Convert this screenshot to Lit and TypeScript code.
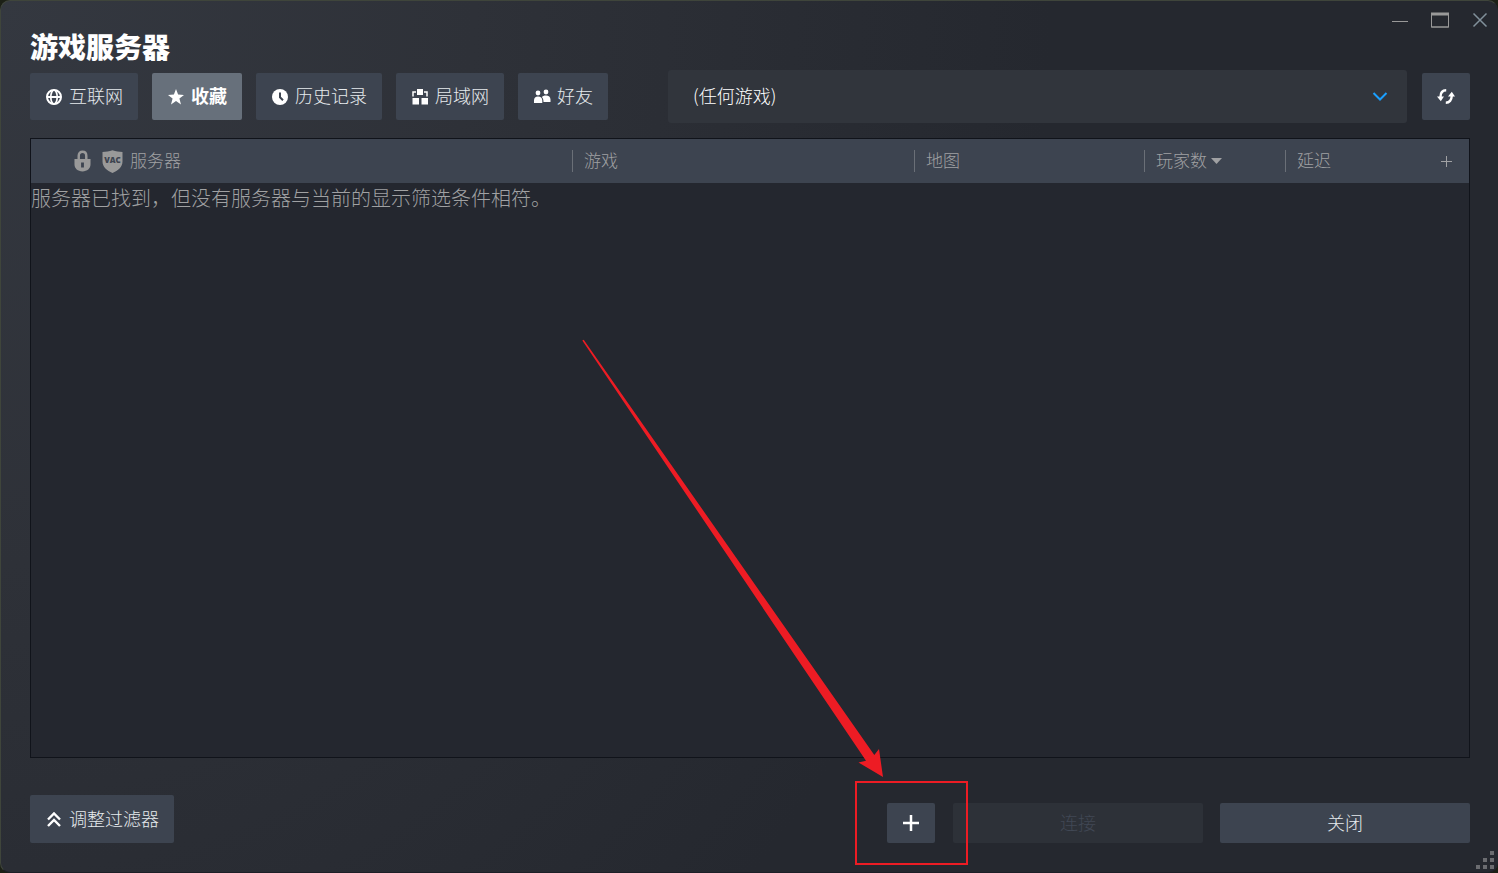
import { LitElement, html, css, svg } from "lit";
import { customElement, state } from "lit/decorators.js";
import { classMap } from "lit/directives/class-map.js";

const globe = svg`<circle cx="8" cy="8" r="7" fill="none" stroke="currentColor" stroke-width="2"/><ellipse cx="8" cy="8" rx="3.200" ry="7" fill="none" stroke="currentColor" stroke-width="1.700"/><path d="M1 8h14" fill="none" stroke="currentColor" stroke-width="1.800"/>`;
const star = svg`<path fill="currentColor" d="M8 0l2.1 5.6 5.9.3-4.6 3.7L13 15.4 8 12.1l-5 3.3 1.6-5.8L0 5.9l5.9-.3z"/>`;
const clock = svg`<circle cx="8" cy="8" r="8" fill="currentColor"/><path d="M8 3.5v4.8l3 3" fill="none" stroke="#3d4450" stroke-width="2"/>`;
const lan = svg`<path fill="currentColor" d="M5 0h6v6H5zM.500 9h6.500v6.500H.500zM9.500 9H16v6.500H9.500z"/><path d="M4 3H1v4.500M12 3h3v4.500" fill="none" stroke="currentColor" stroke-width="1.500"/>`;
const friends = svg`<circle cx="4" cy="4" r="2.400" fill="currentColor"/><circle cx="12" cy="3" r="2.400" fill="currentColor"/><path fill="currentColor" d="M0 14v-2.500C0 9 1.500 7.500 4 7.500S8.300 9 8.300 11.500V14zM9.500 13c0-2-.4-3.600-1.700-4.900C8.500 7 10 6.400 12 6.400c2.700 0 4.500 1.400 4.500 4.200V13z"/>`;

const TABS = [
  { label: "互联网", icon: globe },
  { label: "收藏", icon: star },
  { label: "历史记录", icon: clock },
  { label: "局域网", icon: lan },
  { label: "好友", icon: friends },
];

@customElement("app-root")
export class AppRoot extends LitElement {
  @state() private active = 1;

  static styles = css`
    :host {
      display: block;
      height: 100vh;
      background: #1c2016;
      font-family: "Noto Sans CJK SC", sans-serif;
      font-weight: 300;
      color: #e6eaed;
    }
    * { box-sizing: border-box; }
    button, select {
      font: inherit;
      color: inherit;
      border: 0;
      margin: 0;
      padding: 0;
      background: none;
    }
    svg { display: block; flex: none; }
    .window {
      position: relative;
      display: flex;
      flex-direction: column;
      height: 100%;
      padding: 0 27px 29px 29px;
      border: 1px solid #3f453b;
      border-right-color: #25282e;
      border-bottom-color: #1d1f27;
      border-radius: 10px;
      background: radial-gradient(ellipse 1050px 1250px at 0 0, #343840 0%, #2e3138 45%, #25282f 100%) #25282f;
      overflow: hidden;
    }
    .titlebar {
      display: flex;
      justify-content: space-between;
      align-items: flex-start;
      height: 69px;
    }
    h1 {
      margin: 0;
      padding-top: 25px;
      font-size: 28px;
      line-height: 40px;
      font-weight: 900;
      color: #fff;
    }
    .controls { display: flex; gap: 4px; margin-right: -28px; }
    .controls button {
      display: grid;
      place-items: center;
      width: 36px;
      height: 38px;
      color: #999;
    }
    .toolbar { display: flex; align-items: center; }
    .tabs { display: flex; gap: 14px; margin-right: 60px; }
    .btn {
      display: flex;
      align-items: center;
      justify-content: center;
      gap: 8px;
      border-radius: 2px;
      background: #3d4450;
      font-size: 18px;
      line-height: 28px;
      white-space: nowrap;
    }
    .btn span { padding-bottom: 3px; }
    .labelled { padding: 0 15px 0 16px; gap: 7px; }
    .tab { height: 47px; }
    .tab.active { background: #67707b; color: #fff; font-weight: 700; }
    .icon { color: #fff; overflow: visible; }
    .picker { position: relative; flex: 1; margin-right: 15px; }
    .picker select {
      display: block;
      appearance: none;
      width: 100%;
      height: 53px;
      padding: 0 60px 4px 25px;
      border-radius: 3px;
      background: #31353c;
      font-size: 18px;
      color: #fff;
    }
    .picker svg { position: absolute; right: 19px; top: 19px; pointer-events: none; }
    .refresh { width: 48px; height: 47px; }
    .list {
      flex: 1;
      margin-top: 15px;
      border: 1px solid #10131a;
      background: #24272f;
      min-height: 0;
    }
    table { width: 100%; border-collapse: collapse; table-layout: fixed; }
    thead { background: #3d4450; }
    th {
      height: 44px;
      padding: 0;
      font-weight: 300;
      font-size: 17px;
      line-height: 20px;
      text-align: left;
      color: #a0a1a3;
    }
    .cell { display: flex; align-items: center; height: 22px; padding-left: 11px; border-left: 1px solid #6a6f77; }
    .cell span { padding-bottom: 2px; }
    .cell.server { padding-left: 43px; border-left: 0; }
    .shield { margin: 0 7px 0 11px; }
    .sort { margin-left: 4px; }
    .game { width: 342px; }
    .map { width: 230px; }
    .players { width: 141px; }
    .ping { width: 138px; }
    .more { width: 46px; }
    .more button { display: grid; place-items: center; width: 48px; height: 44px; color: #a0a1a3; }
    td { padding: 0; font-size: 20px; line-height: 30px; color: #a0a1a3; }
    footer { display: flex; align-items: flex-end; gap: 17px; padding-top: 37px; }
    .filters { height: 48px; margin-right: auto; }
    .add { width: 48px; height: 40px; margin-right: 1px; }
    .wide { width: 250px; height: 40px; }
    .wide:disabled { background: #2d3138; color: #414855; }
    .grip { position: absolute; right: 3px; bottom: 3px; }
    .note { position: absolute; inset: -1px; width: calc(100% + 2px); height: calc(100% + 2px); pointer-events: none; }
    .vac { font: 800 8px "Open Sans", sans-serif; }
  `;

  render() {
    return html`
      <main class="window">
        <header class="titlebar">
          <h1>游戏服务器</h1>
          <div class="controls">
            <button aria-label="最小化"><svg width="18" height="16"><path d="M1 9.500h16" stroke="currentColor"/></svg></button>
            <button aria-label="最大化"><svg width="18" height="16"><path d="M.5 1v14h17V1" fill="none" stroke="currentColor"/><path d="M0 2h18" stroke="currentColor" stroke-width="3"/><path d="M0 15h18" stroke="currentColor"/></svg></button>
            <button aria-label="关闭窗口"><svg width="16" height="16"><path d="M1.500 1.500l13 13M14.500 1.500l-13 13" stroke="#81909a" stroke-width="1.500"/></svg></button>
          </div>
        </header>

        <div class="toolbar">
          <nav class="tabs">
            ${TABS.map(
              (t, i) => html`<button
                class=${classMap({ btn: true, labelled: true, tab: true, active: i === this.active })}
                @click=${() => (this.active = i)}
              ><svg class="icon" width="16" height="16" viewBox="0 0 16 16">${t.icon}</svg><span>${t.label}</span></button>`
            )}
          </nav>
          <div class="picker">
            <select aria-label="游戏"><option>(任何游戏)</option></select>
            <svg width="16" height="16"><path d="M1.500 4l6.500 6.500L14.500 4" fill="none" stroke="#1a9fff" stroke-width="2"/></svg>
          </div>
          <button class="btn refresh" aria-label="刷新">
            <svg class="icon" width="18" height="16" viewBox="0 0 18 16">
              <path d="M9.200 1.300C5.600 1.300 3.500 4 3.500 8" fill="none" stroke="currentColor" stroke-width="2.400"/>
              <path fill="currentColor" d="M0 7.500h7l-3.200 4.700zM11 7.500h7l-3.200-4.700z"/>
              <path d="M8.800 13.700c3.600 0 5.900-2.700 5.900-6.700" fill="none" stroke="currentColor" stroke-width="2.400"/>
            </svg>
          </button>
        </div>

        <section class="list">
          <table>
            <thead>
              <tr>
                <th><div class="cell server">
                  <svg width="17" height="22" viewBox="0 0 18 22"><path d="M5 11V5.500C5 3 6.500 1.300 9 1.300S13 3 13 5.500V11" fill="none" stroke="#999" stroke-width="2.600"/><path fill="#999" fill-rule="evenodd" d="M.5 9h17v5.500c0 4.500-3.500 7.500-8.500 7.500S.5 19 .5 14.500zM7.500 12.500V18h3v-5.500z"/></svg>
                  <svg class="shield" width="21" height="23" viewBox="0 0 21 23"><path fill="#999" d="M.5 2C4 2 7 1.200 10.500.3 14 1.200 17 2 20.500 2v9.500c0 5.500-4.500 9-10 11.500C5 20.500.5 17 .5 11.500z"/><text class="vac" x="10.500" y="12.500" text-anchor="middle" fill="#3d4450">VAC</text></svg>
                  <span>服务器</span></div></th>
                <th class="game"><div class="cell"><span>游戏</span></div></th>
                <th class="map"><div class="cell"><span>地图</span></div></th>
                <th class="players"><div class="cell"><span>玩家数</span><svg class="sort" width="11" height="6"><path fill="#a0a1a3" d="M0 0h11L5.500 6z"/></svg></div></th>
                <th class="ping"><div class="cell"><span>延迟</span></div></th>
                <th class="more"><button aria-label="添加列"><svg width="12" height="12"><path d="M0 6.500h11M5.500 1v11" stroke="currentColor"/></svg></button></th>
              </tr>
            </thead>
            <tbody><tr><td colspan="6">服务器已找到，但没有服务器与当前的显示筛选条件相符。</td></tr></tbody>
          </table>
        </section>

        <footer>
          <button class="btn labelled filters"><svg class="icon" width="16" height="16"><path d="M2 8.500l6-6 6 6M2 15l6-6 6 6" fill="none" stroke="currentColor" stroke-width="2.400"/></svg><span>调整过滤器</span></button>
          <button class="btn add" aria-label="添加服务器"><svg class="icon" width="16" height="16"><path d="M0 8h16M8 0v16" stroke="currentColor" stroke-width="2.500"/></svg></button>
          <button class="btn wide" disabled><span>连接</span></button>
          <button class="btn wide"><span>关闭</span></button>
        </footer>

        <svg class="grip" width="18" height="18"><path fill="#6b6c70" d="M14 0h4v4h-4zM7 7h4v4H7zM14 7h4v4h-4zM0 14h4v4H0zM7 14h4v4H7zM14 14h4v4h-4z"/></svg>
        <svg class="note" viewBox="0 0 1498 873">
          <path fill="#ed1c24" d="M582.300 340.500L583.700 339.800L874.300 755L879 749L883 777L858.500 762.600L866 760.700z"/>
          <path fill="none" stroke="#ed1c24" stroke-width="2" d="M856 782h111v82H856z"/>
        </svg>
      </main>
    `;
  }
}
